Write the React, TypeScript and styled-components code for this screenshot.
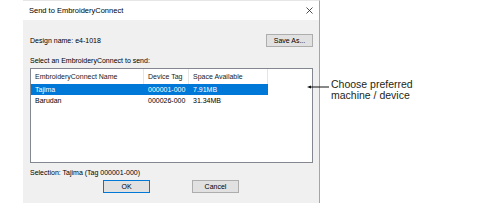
import styled, { createGlobalStyle } from 'styled-components'

const GlobalStyle = createGlobalStyle`
  html, body {
    margin: 0;
    padding: 0;
    background: #fff;
  }
`

const Page = styled.div`
  display: flex;
  padding-left: 23px;
  width: 485px;
  height: 219px;
  box-sizing: border-box;
  font-family: 'Liberation Sans', Arial, sans-serif;
`

const Dialog = styled.div`
  position: relative;
  width: 297px;
  height: 203px;
  box-sizing: border-box;
  border-right: 1px solid #a5a5a5;
  border-top: 1px solid #e6e6e6;
  display: flex;
  flex-direction: column;
  font-size: 7px;
  color: #000;
`

const TitleBar = styled.div`
  height: 19px;
  flex-shrink: 0;
  display: flex;
  align-items: center;
  justify-content: space-between;
  padding: 0 6px 0 6px;
  background: #fff;
  font-size: 7.5px;
`

const Body = styled.div`
  flex: 1;
  background: #f0f0f0;
  padding: 14px 6px 8px 7px;
  display: flex;
  flex-direction: column;
`

const NameRow = styled.div`
  display: flex;
  align-items: center;
  justify-content: space-between;
  height: 13px;
  padding-left: 0;
`

const Label = styled.div<{ $top: number }>`
  margin-top: ${({ $top }) => $top}px;
  line-height: 9px;
  height: 9px;
  white-space: nowrap;
`

const Button = styled.div<{ $default?: boolean }>`
  width: 47px;
  height: 13px;
  box-sizing: border-box;
  display: flex;
  align-items: center;
  justify-content: center;
  background: #e1e1e1;
  border: 1px solid ${({ $default }) => ($default ? '#0078d7' : '#adadad')};
  font-size: 7px;
`

const ListBox = styled.div`
  margin-top: 3px;
  height: 95px;
  box-sizing: border-box;
  border: 1px solid #828790;
  background: #fff;
`

const Grid = styled.div`
  display: grid;
  grid-template-columns: 113px 45px 79px;
`

const HeaderCell = styled.div`
  height: 15px;
  line-height: 15px;
  padding-left: 4px;
  border-right: 1px solid #e5e5e5;
  white-space: nowrap;
  overflow: hidden;
  color: #1a1a1a;
`

const Row = styled.div<{ $selected?: boolean }>`
  display: contents;
  & > div {
    height: 11px;
    line-height: 11px;
    padding-left: 4px;
    white-space: nowrap;
    background: ${({ $selected }) => ($selected ? '#0078d7' : 'transparent')};
    color: ${({ $selected }) => ($selected ? '#fff' : '#000')};
  }
`

const ButtonRow = styled.div`
  margin-top: 3px;
  display: flex;
  justify-content: center;
  gap: 42px;
  padding-right: 1px;
`

const Callout = styled.div`
  position: absolute;
  left: 284px;
  top: 78px;
  display: flex;
  align-items: flex-start;
  gap: 2px;
  font-family: 'Liberation Sans', Arial, sans-serif;
  font-size: 10.5px;
  line-height: 11px;
  color: #231f20;
  white-space: nowrap;
`

const machines = [
  { name: 'Tajima', tag: '000001-000', space: '7.91MB', selected: true },
  { name: 'Barudan', tag: '000026-000', space: '31.34MB', selected: false },
]

const CloseIcon = () => (
  <svg width="7" height="7" viewBox="0 0 7 7">
    <path d="M0.5 0.5 L6.5 6.5 M6.5 0.5 L0.5 6.5" stroke="#222" strokeWidth="0.8" fill="none" />
  </svg>
)

const Arrow = () => (
  <svg width="22" height="6" viewBox="0 0 22 6" style={{ marginTop: 5 }}>
    <path d="M2 3 H22" stroke="#111" strokeWidth="1" />
    <path d="M0 3 L4 1.4 L4 4.6 Z" fill="#111" />
  </svg>
)

export default function App() {
  return (
    <>
      <GlobalStyle />
      <Page>
        <Dialog>
          <TitleBar>
            <span>Send to EmbroideryConnect</span>
            <CloseIcon />
          </TitleBar>
          <Body>
            <NameRow>
              <span>Design name: e4-1018</span>
              <Button>Save As...</Button>
            </NameRow>
            <Label $top={9}>Select an EmbroideryConnect to send:</Label>
            <ListBox>
              <Grid>
                <HeaderCell>EmbroideryConnect Name</HeaderCell>
                <HeaderCell>Device Tag</HeaderCell>
                <HeaderCell>Space Available</HeaderCell>
                {machines.map((m) => (
                  <Row key={m.name} $selected={m.selected}>
                    <div>{m.name}</div>
                    <div>{m.tag}</div>
                    <div>{m.space}</div>
                  </Row>
                ))}
              </Grid>
            </ListBox>
            <Label $top={5}>Selection: Tajima (Tag 000001-000)</Label>
            <ButtonRow>
              <Button $default>OK</Button>
              <Button>Cancel</Button>
            </ButtonRow>
          </Body>
          <Callout>
            <Arrow />
            <div>
              Choose preferred
              <br />
              machine / device
            </div>
          </Callout>
        </Dialog>
      </Page>
    </>
  )
}
